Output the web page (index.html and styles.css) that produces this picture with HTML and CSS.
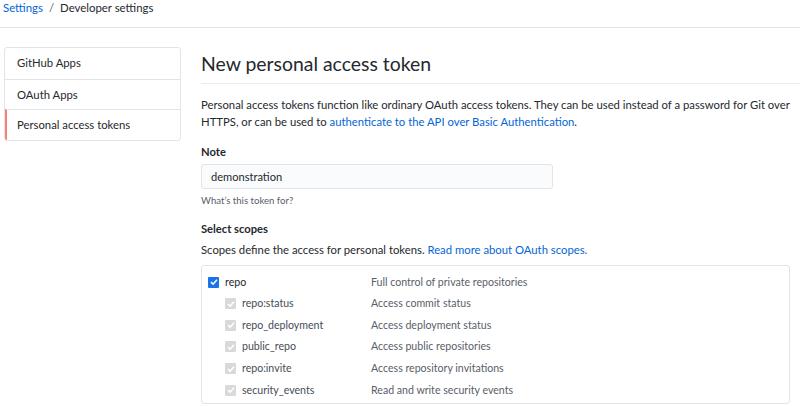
FILE: index.html
```html
<!DOCTYPE html>
<html>
<head>
<meta charset="utf-8">
<link rel="stylesheet" href="styles.css">
</head>
<body>
<div class="crumbs"><a class="link" href="#">Settings</a><span class="sep">/</span><span>Developer settings</span></div>
<div class="layout">
  <nav class="menu">
    <div class="menu-item">GitHub Apps</div>
    <div class="menu-item">OAuth Apps</div>
    <div class="menu-item selected">Personal access tokens</div>
  </nav>
  <main class="main">
    <h1 class="title">New personal access token</h1>
    <p class="intro">Personal access tokens function like ordinary OAuth access tokens. They can be used instead of a password for Git over HTTPS, or can be used to <a class="link" href="#">authenticate to the API over Basic Authentication</a>.</p>
    <div class="label">Note</div>
    <div class="input">demonstration</div>
    <div class="hint">What’s this token for?</div>
    <div class="label scopes-label">Select scopes</div>
    <p class="scopes-desc">Scopes define the access for personal tokens. <a class="link" href="#">Read more about OAuth scopes.</a></p>
    <div class="scopes">
      <div class="row top">
        <span class="name"><span class="cb on"><svg viewBox="0 0 10 10" width="10" height="10"><path d="M2 5.2 L4.1 7.2 L8 2.8" fill="none" stroke="#fff" stroke-width="1.6"/></svg></span>repo</span>
        <span class="desc">Full control of private repositories</span>
      </div>
      <div class="row sub">
        <span class="name"><span class="cb off"><svg viewBox="0 0 10 10" width="10" height="10"><path d="M2 5.2 L4.1 7.2 L8 2.8" fill="none" stroke="#fff" stroke-width="1.6"/></svg></span>repo:status</span>
        <span class="desc">Access commit status</span>
      </div>
      <div class="row sub">
        <span class="name"><span class="cb off"><svg viewBox="0 0 10 10" width="10" height="10"><path d="M2 5.2 L4.1 7.2 L8 2.8" fill="none" stroke="#fff" stroke-width="1.6"/></svg></span>repo_deployment</span>
        <span class="desc">Access deployment status</span>
      </div>
      <div class="row sub">
        <span class="name"><span class="cb off"><svg viewBox="0 0 10 10" width="10" height="10"><path d="M2 5.2 L4.1 7.2 L8 2.8" fill="none" stroke="#fff" stroke-width="1.6"/></svg></span>public_repo</span>
        <span class="desc">Access public repositories</span>
      </div>
      <div class="row sub">
        <span class="name"><span class="cb off"><svg viewBox="0 0 10 10" width="10" height="10"><path d="M2 5.2 L4.1 7.2 L8 2.8" fill="none" stroke="#fff" stroke-width="1.6"/></svg></span>repo:invite</span>
        <span class="desc">Access repository invitations</span>
      </div>
      <div class="row sub">
        <span class="name"><span class="cb off"><svg viewBox="0 0 10 10" width="10" height="10"><path d="M2 5.2 L4.1 7.2 L8 2.8" fill="none" stroke="#fff" stroke-width="1.6"/></svg></span>security_events</span>
        <span class="desc">Read and write security events</span>
      </div>
    </div>
  </main>
</div>
</body>
</html>
```

FILE: styles.css
```css
* { box-sizing: border-box; }
html, body { margin: 0; padding: 0; background: #fff; }
body {
  font-family: Lato, "Open Sans", sans-serif;
  font-size: 11.4px;
  color: #24292e;
  overflow: hidden;
  height: 406px;
}
.link { color: #0366d6; text-decoration: none; }
.crumbs {
  height: 28px;
  padding: 0 0 0 3px;
  line-height: 15px;
  font-size: 11.4px;
  border-bottom: 1px solid #e1e4e8;
  color: #24292e;
}
.crumbs .sep { color: #586069; margin: 0 6px; }
.layout {
  display: flex;
  gap: 20px;
  padding: 19px 0 0 4px;
}
.menu {
  width: 177px;
  flex: none;
  border: 1px solid #e1e4e8;
  border-radius: 3px;
  align-self: flex-start;
  overflow: hidden;
}
.menu-item {
  height: 30.5px;
  line-height: 30px;
  padding-left: 12px;
  font-size: 11.3px;
  border-top: 1px solid #e1e4e8;
}
.menu-item:first-child { border-top: 0; }
.menu-item.selected { border-left: 2px solid #f9826c; padding-left: 10px; }
.main { flex: 1; min-width: 0; }
.title {
  margin: 0;
  font-size: 19.4px;
  font-weight: 400;
  line-height: 30px;
  padding: 2px 0 4px;
  border-bottom: 1px solid #eaecef;
}
.intro {
  margin: 12px 0 0;
  line-height: 17px;
  font-size: 11.3px;
}
.label {
  margin-top: 13px;
  font-weight: 700;
  line-height: 17px;
  font-size: 11.2px;
}
.input {
  margin-top: 4px;
  width: 352px;
  height: 25px;
  line-height: 24px;
  padding-left: 9px;
  background: #fafbfc;
  border: 1px solid #e1e4e8;
  border-radius: 3px;
  font-size: 11.1px;
}
.hint {
  margin-top: 4px;
  font-size: 9.6px;
  line-height: 15px;
  color: #586069;
}
.scopes-label { margin-top: 12px; }
.scopes-desc { margin: 4px 0 0; line-height: 17px; font-size: 11.3px; }
.scopes {
  margin-top: 7px;
  width: 589px;
  border: 1px solid #e1e4e8;
  border-radius: 3px;
  padding: 5px 0 2px 6px;
}
.row {
  display: flex;
  height: 21.6px;
  line-height: 21px;
  align-items: center;
}
.row.top { height: 22px; }
.name {
  display: flex;
  align-items: center;
  width: 163px;
  flex: none;
  font-size: 10.6px;
}
.row.sub .name { padding-left: 17px; color: #444d56; }
.desc { font-size: 10.6px; color: #586069; }
.cb {
  width: 11px;
  height: 11px;
  border-radius: 1px;
  margin-right: 6px;
  display: inline-flex;
  align-items: center;
  justify-content: center;
}
.cb svg { display: block; }
.cb.on { background: #1a73e8; }
.cb.off { background: #d9d9d9; }
```
